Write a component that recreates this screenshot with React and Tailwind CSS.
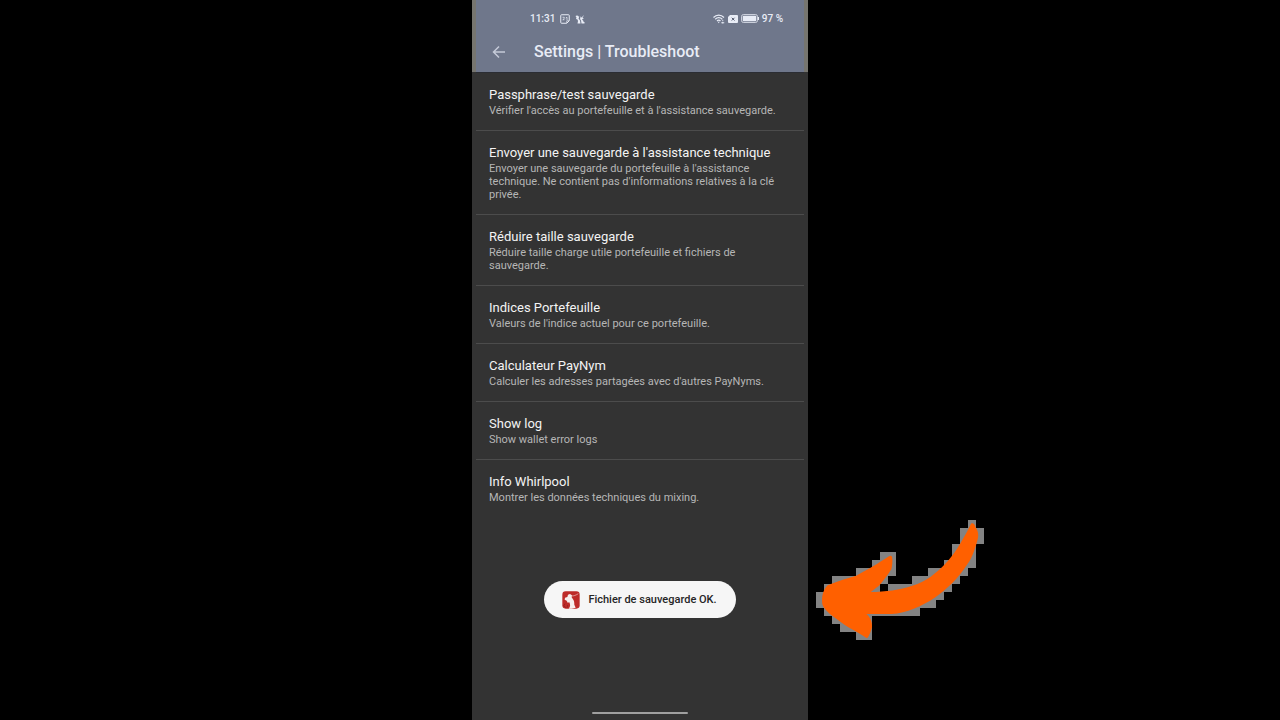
const settings = [
  { title: 'Passphrase/test sauvegarde', text: "Vérifier l'accès au portefeuille et à l'assistance sauvegarde." },
  {
    title: "Envoyer une sauvegarde à l'assistance technique",
    text: "Envoyer une sauvegarde du portefeuille à l'assistance technique. Ne contient pas d'informations relatives à la clé privée.",
  },
  { title: 'Réduire taille sauvegarde', text: 'Réduire taille charge utile portefeuille et fichiers de sauvegarde.' },
  { title: 'Indices Portefeuille', text: "Valeurs de l'indice actuel pour ce portefeuille." },
  { title: 'Calculateur PayNym', text: "Calculer les adresses partagées avec d'autres PayNyms." },
  { title: 'Show log', text: 'Show wallet error logs' },
  { title: 'Info Whirlpool', text: 'Montrer les données techniques du mixing.' },
];

function CalendarIcon() {
  return (
    <svg className="size-[10px]" viewBox="0 0 20 20" fill="none" stroke="currentColor" strokeWidth="2" aria-hidden="true">
      <path d="M3 1.5h14a1.5 1.5 0 0 1 1.5 1.5v10.5l-5 5H3A1.5 1.5 0 0 1 1.5 17V3A1.5 1.5 0 0 1 3 1.5z" />
      <path d="M18 13.500h-4.500V18" strokeWidth="1.500" />
      <path d="M5 6.500h3.500V9L5.500 11.500H9M11.500 8L14 6.500V12" strokeWidth="1.500" />
    </svg>
  );
}

function SamuraiGlyph() {
  return (
    <svg className="size-[10px]" viewBox="0 0 20 20" fill="currentColor" aria-hidden="true">
      <path d="M1 4l3-1 3 1 1 3-1 2 3 4 1 6H5l1-5-1-3-3-1 1-3z" />
      <path d="M9 4l4 3 5-5-3 6h3l-4 3 3 3v2h2v3h-6l-1-6-2-3 1-3z" />
    </svg>
  );
}

function WifiIcon() {
  return (
    <svg className="h-[10px] w-[12px]" viewBox="0 0 24 20" fill="none" stroke="currentColor" strokeWidth="2.4" aria-hidden="true">
      <path d="M1 7C7 .5 16 .5 22 7M4.5 10.5c4-4.200 10-4.200 14 0M8 14c2.200-2.200 5-2.200 7 0" />
      <path d="M9.500 15.500h4l-2 3z" fill="currentColor" stroke="none" />
      <path d="M19.500 11.500v3M19.500 16v3M16.500 17.500h6" strokeWidth="1.800" />
    </svg>
  );
}

function SimIcon() {
  return (
    <svg className="h-[8px] w-[10px]" viewBox="0 0 20 16" aria-hidden="true">
      <path d="M4 0h14a2 2 0 0 1 2 2v12a2 2 0 0 1-2 2H2a2 2 0 0 1-2-2V4z" fill="currentColor" />
      <path d="M7.500 5.500l5.500 5.500m0-5.500L7.500 11" stroke="#4f566a" strokeWidth="2" />
    </svg>
  );
}

function BatteryIcon() {
  return (
    <svg className="h-[9px] w-[18px]" viewBox="0 0 36 18" aria-hidden="true">
      <rect x="1" y="1" width="32" height="16" rx="4" fill="none" stroke="currentColor" strokeWidth="1.500" />
      <rect x="3.500" y="3.500" width="27" height="11" rx="1.500" fill="currentColor" />
      <path d="M35 6v6" stroke="currentColor" strokeWidth="2" />
    </svg>
  );
}

function BackIcon() {
  return (
    <svg className="h-[14px] w-[14px]" viewBox="0 0 28 28" fill="none" stroke="currentColor" strokeWidth="3" aria-hidden="true">
      <path d="M26 14H4M14 3L3 14l11 11" />
    </svg>
  );
}

function AppLogo() {
  return (
    <svg className="size-[18px]" viewBox="0 0 54 54" aria-hidden="true">
      <rect x="1" y="1" width="52" height="52" rx="10" fill="#bd2b29" />
      <path d="M9 20l7-2 2-7 6-2 6 4-1 6 3 4c5 6 5 12 5 18l4 9-12 3H20c6-6 5-12 2-19l-5 1-3-6-6-3z" fill="#f6efee" />
      <path d="M28 15c8 0 13-2 21-7" fill="none" stroke="#f0c9c7" strokeWidth="2" />
      <path d="M9 38l-4 7 7 5M17 42l-2 9" fill="none" stroke="#8d1c1c" strokeWidth="2" />
    </svg>
  );
}

function Arrow() {
  return (
    <svg className="absolute left-full top-[520px] ml-[8px] h-[120px] w-[168px]" viewBox="18 30 504 360" aria-hidden="true">
      <path
        shapeRendering="crispEdges"
        fill="#838383"
        d="M474 30h24v24h24v48h-24v72h-24v24h-24v24h-24v24h-24v24h-24v24h-48v24H186v72h-48v-24H90v-24H66v-24H42v-24H18v-48h24v-24h24v-24h72v-24h48v-24h24v-24h48v72h-24v24h72v-24h48v-24h48v-24h24v-48h24v-48h24z"
      />
      <path d="M210 222h24v24h-24z" fill="#000" shapeRendering="crispEdges" />
      <path
        fill="#ff6000"
        d="M483 41C489 38 494 42 496 51C504 61 507 75 503 88C495 118 487 143 472 163C448 202 409 240 374 263C334 289 290 309 245 312H169C179 320 187 334 186 351C183 364 179 373 174 382Q170 387 165 381C141 365 109 350 83 329C64 316 43 301 37 283C34 262 39 238 53 226C79 215 107 206 139 197C169 181 207 159 237 139Q243 135 246 140C249 154 246 168 244 178C235 194 220 212 207 227L182 246C226 245 270 240 307 227C350 215 381 186 406 161C432 136 456 93 475 58Z"
      />
    </svg>
  );
}

export default function App() {
  return (
    <div className="flex min-h-screen justify-center overflow-x-hidden bg-black font-['Roboto',sans-serif]">
      <div className="relative flex w-full max-w-[336px] flex-col bg-[#333333]">
        <header className="border-x-4 border-[#76756f] bg-[#6f778b] text-[#e8ecf6]">
          <div className="flex h-[36px] items-center justify-between pl-[54px] pr-[21px] pt-px text-[10px] font-medium leading-[13px]">
            <div className="flex items-center gap-[5px]">
              <span>11:31</span>
              <CalendarIcon />
              <SamuraiGlyph />
            </div>
            <div className="flex items-center gap-[3px]">
              <WifiIcon />
              <SimIcon />
              <BatteryIcon />
              <span>97 %</span>
            </div>
          </div>
          <div className="flex h-[36px] items-center gap-[20px] pb-[5px] pl-[8px]">
            <button type="button" aria-label="Retour" className="flex size-[30px] items-center justify-center text-[#c5cad8]">
              <BackIcon />
            </button>
            <h1 className="text-[16px] font-medium leading-[21px]">Settings | Troubleshoot</h1>
          </div>
        </header>

        <main className="mx-[4px] flex-1 border-t border-[#2b2d33]">
          <ul className="-mt-px">
            {settings.map((item) => (
              <li key={item.title} className="border-t border-[#4c4c4c] first:border-transparent">
                <button type="button" className="flex w-full flex-col gap-px px-[13px] py-[13px] text-left">
                  <span className="text-[13px] leading-[17px] text-[#f4f4f4]">{item.title}</span>
                  <span className="text-[11px] leading-[13px] text-[#b6b6b6]">{item.text}</span>
                </button>
              </li>
            ))}
          </ul>
        </main>

        <div
          role="status"
          className="absolute inset-x-0 top-[581px] mx-auto flex h-[37px] w-fit items-center gap-[8px] rounded-full bg-[#f6f6f6] pl-[18px] pr-[19px] text-[11px] font-medium leading-[14px] text-[#262626]"
        >
          <AppLogo />
          <span>Fichier de sauvegarde OK.</span>
        </div>

        <div className="mx-auto mb-[6px] h-[2px] w-[96px] rounded-full bg-[#a0a0a0]" />
        <Arrow />
      </div>
    </div>
  );
}
